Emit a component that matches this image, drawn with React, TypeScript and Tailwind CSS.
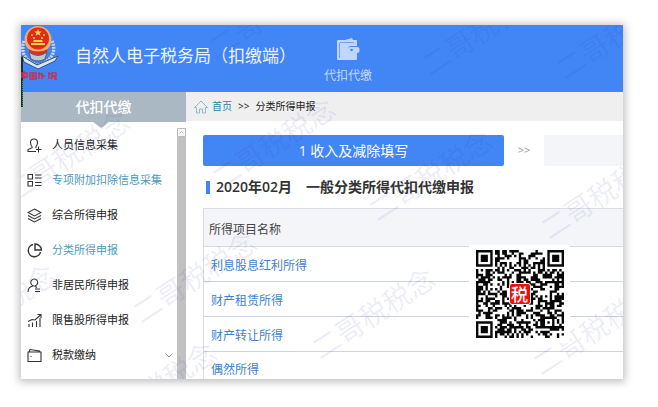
import React from "react";

type Cell = boolean;

const QR_SIZE = 37;

function buildQr(): Cell[][] {
  let seed = 20200217;
  const next = () => {
    seed = (seed * 1103515245 + 12345) % 2147483648;
    return seed / 2147483648;
  };
  const grid = Array.from({ length: QR_SIZE }, () =>
    Array.from({ length: QR_SIZE }, () => next() > 0.46)
  );
  const finder = (ox: number, oy: number) => {
    for (let y = -1; y < 8; y++) {
      for (let x = -1; x < 8; x++) {
        const row = grid[oy + y];
        if (!row || ox + x < 0 || ox + x >= QR_SIZE) continue;
        const d = Math.max(Math.abs(x - 3), Math.abs(y - 3));
        row[ox + x] = d === 3 || d <= 1;
      }
    }
  };
  finder(0, 0);
  finder(QR_SIZE - 7, 0);
  finder(0, QR_SIZE - 7);
  for (let y = -2; y <= 2; y++) {
    for (let x = -2; x <= 2; x++) {
      grid[30 + y][30 + x] = Math.max(Math.abs(x), Math.abs(y)) !== 1;
    }
  }
  for (let i = 8; i < QR_SIZE - 8; i++) {
    grid[6][i] = i % 2 === 0;
    grid[i][6] = i % 2 === 0;
  }
  return grid;
}

const qrPath = buildQr()
  .flatMap((row, y) => row.map((on, x) => (on ? `M${x} ${y}h1v1h-1z` : "")))
  .join("");

function QrCode() {
  return (
    <div className="absolute top-[220px] left-[448px] flex h-[98px] w-[101px] items-center justify-center bg-white">
      <svg viewBox="0 0 37 37" className="size-[88px]" role="img" aria-label="QR">
        <path d={qrPath} fill="#080808" />
      </svg>
      <span className="absolute flex size-[22px] items-center justify-center rounded-[3px] border border-white bg-[#f20d0d] text-[17px] leading-none font-medium text-white">
        税
      </span>
    </div>
  );
}

function Emblem() {
  return (
    <svg viewBox="0 0 38 82" className="relative h-[82px] w-[38px] shrink-0" aria-hidden="true">
      <g fill="none" stroke="#c9d6ea" strokeWidth="3.500" strokeDasharray="2 1">
        <path d="M3 16C-1 27 5 37 16 40" />
        <path d="M31 16C36 27 29 37 18 40" />
      </g>
      <g fill="none" stroke="#536a91" strokeWidth="1" strokeDasharray="1 2">
        <path d="M4 18C1 27 7 35 16 38" />
        <path d="M30 18C33 27 27 35 18 38" />
      </g>
      <path d="M1 31L16 40L37 31L34 36L17 44L3 37Z" fill="#dce5ef" stroke="#30517f" strokeWidth="1" />
      <path d="M8 27Q17 34 26 27L24 34Q17 38 10 34Z" fill="#b9c8da" stroke="#496285" strokeWidth="1" />
      <circle cx="17" cy="14.500" r="13.500" fill="#e9b070" />
      <circle cx="17" cy="13.500" r="11" fill="#e22a18" />
      <path d="M17 4l1 2.600h2.800l-2.200 1.600.8 2.600-2.400-1.600-2.400 1.600.8-2.600-2.200-1.600H16z" fill="#ffd84a" />
      <g fill="#ffd84a">
        <circle cx="11" cy="10" r="1" />
        <circle cx="23" cy="10" r="1" />
        <circle cx="13" cy="13" r="1" />
        <circle cx="21" cy="13" r="1" />
        <path d="M12 17h10l-1-2h-8zM10 18h14v2H10z" />
      </g>
      <path d="M7 24Q17 29 27 24L25 28Q17 32 9 28Z" fill="#d8301c" />
      <path d="M1 32v50" stroke="#17332f" strokeWidth="2" />
      <path d="M1.500 56v25" stroke="#4f9a58" strokeWidth="1" strokeDasharray="1 1" />
      <g stroke="#c9304f" strokeWidth="1.500" fill="none">
        <path d="M1 48h5v4H1zM3 46v8M9 48h6v6H9zM10 51h4M12 48v6M18 47v7M17 49h3M21 48v6M20 51h4M28 47v7M27 49h3M31 48h4v3h-4zM32 51l-2 3M34 51v3h2" />
      </g>
    </svg>
  );
}

function WalletIcon() {
  return (
    <svg viewBox="0 0 24 24" className="size-6" aria-hidden="true">
      <path d="M1 4q0-1 1-1h7l7-2 1 2h3q1 0 1 1v5h-6q-3 0-3 3.500t3 3.500h6v6q0 1-1 1H2q-1 0-1-1z" fill="#bfd7fd" />
      <path d="M4 5.500h14M3.500 6v15" stroke="#6ea2f8" fill="none" />
      <rect x="12" y="10" width="11.500" height="6" rx="2" fill="#bfd7fd" />
      <circle cx="15.500" cy="13" r="1.300" fill="#4285f4" />
    </svg>
  );
}

const icons: Record<string, React.ReactNode> = {
  person: <path d="M5.500 9.500Q3.500 7 3.500 4.500 3.500 1 7 1t3.500 3.500Q10.500 7 8.500 9.500M5.500 9.500L1 11.500V13.500h8M8.500 9.500l1 .5M11.500 8.500v6M9 11.500h5.500" />,
  list: <path d="M1 1.500h4.500V6H1zM1 8.500h4.500V13H1zM8 2h6.500M8 5h6.500M8 9.500h6.500M8 12.500h6.500" />,
  layers: <path d="M7.500 1L14 4.500 7.500 8 1 4.500zM1 7.500L7.500 11 14 7.500M1 10.500L7.500 14 14 10.500" />,
  pie: <path strokeWidth="1.400" d="M6 1.500A6.200 6.200 0 1 0 13.500 9M8 1v6h6.500A6.500 6.500 0 0 0 8 1z" />,
  resident: <path d="M7 8a3.500 3.500 0 1 1 .5 0M1 14q0-5 5-6M7.500 8l2.500 1.500M8 11h5M8 13.500h5" />,
  chart: <path d="M2 14v-3M5.500 14V9.500M9.500 14V8M13 14V5M1 8.500L5 6.500l3 .500 5.500-5M10.500 1.500H14V5" />,
  wallet: <path d="M1 4h13v9.500H1zM2 4l1-2.500L12.500 3v1M3.500 8.500h1" />,
};

const menu = [
  { icon: "person", label: "人员信息采集" },
  { icon: "list", label: "专项附加扣除信息采集", active: true },
  { icon: "layers", label: "综合所得申报" },
  { icon: "pie", label: "分类所得申报", active: true },
  { icon: "resident", label: "非居民所得申报" },
  { icon: "chart", label: "限售股所得申报" },
  { icon: "wallet", label: "税款缴纳", expandable: true },
];

const incomeTypes = ["利息股息红利所得", "财产租赁所得", "财产转让所得", "偶然所得"];

const watermarks = [
  { x: 250, y: -14 },
  { x: 462, y: 4 },
  { x: 597, y: 8 },
  { x: 46, y: 131 },
  { x: 252, y: 118 },
  { x: 409, y: 150 },
  { x: 581, y: 168 },
  { x: -27, y: 284 },
  { x: 173, y: 252 },
  { x: 352, y: 288 },
  { x: 573, y: 304 },
  { x: 133, y: 362 },
];

function Watermarks() {
  return (
    <div className="pointer-events-none absolute inset-0 overflow-hidden" aria-hidden="true">
      {watermarks.map((mark) => (
        <span
          key={`${mark.x}-${mark.y}`}
          className="absolute -translate-x-1/2 -translate-y-1/2 -rotate-33 text-[28px] leading-none whitespace-nowrap text-[#4040b0]/10"
          style={{ left: mark.x, top: mark.y }}
        >
          二哥税税念
        </span>
      ))}
    </div>
  );
}

function Sidebar() {
  return (
    <aside className="flex w-[165px] shrink-0 flex-col">
      <h2 className="flex h-[30px] items-center justify-center bg-[#a9b8c3] text-sm font-medium text-white">
        代扣代缴
      </h2>
      <div className="relative flex flex-1">
        <svg viewBox="0 0 16 6" className="absolute top-0 left-[72px] h-1.5 w-4" aria-hidden="true">
          <path d="M0 0h16L8 6z" fill="#a9b8c3" />
        </svg>
        <nav className="flex-1 py-1.5">
          {menu.map((item) => (
            <a
              key={item.label}
              href="#"
              className={`flex h-[35px] items-center gap-2.5 pr-1 pl-1.5 text-[11px] whitespace-nowrap ${
                item.active ? "text-[#4a9abb]" : "text-[#222]"
              }`}
            >
              <svg viewBox="0 0 15 15" className="size-[15px] shrink-0" fill="none" stroke="#333" strokeWidth="1.1" aria-hidden="true">
                {icons[item.icon]}
              </svg>
              <span className="w-0 flex-1">{item.label}</span>
              {item.expandable && (
                <svg viewBox="0 0 8 5" className="h-[5px] w-2 shrink-0" fill="none" stroke="#999" aria-hidden="true">
                  <path d="M.5.5L4 4 7.500.5" />
                </svg>
              )}
            </a>
          ))}
        </nav>
        <div className="flex w-[9px] flex-col pt-1.5">
          <svg viewBox="0 0 9 9" className="size-[9px] bg-[#f6f6f6]" fill="none" stroke="#bbb" aria-hidden="true">
            <path d="M.5.5h8v8h-8zM2.500 5.500l2-2 2 2" />
          </svg>
          <div className="flex-1 bg-[#c1c1c1]" />
        </div>
      </div>
    </aside>
  );
}

export default function App() {
  return (
    <div className="min-h-screen bg-white pt-[25px] pr-[35px] pb-7 pl-[21px] font-['Open_Sans','Noto_Sans_CJK_SC',sans-serif]">
      <div className="relative bg-white shadow-[0_1px_8px_2px_rgba(0,0,0,0.25)]">
        <header className="relative z-10 flex h-[67px] bg-[#4285f4] text-white">
          <Emblem />
          <h1 className="ml-4 flex h-[62px] items-center text-[17px] whitespace-nowrap text-[#edf4ff]">
            自然人电子税务局（扣缴端）
          </h1>
          <button type="button" className="ml-7 flex flex-col items-center pt-3 text-xs text-[#c5dafd]">
            <WalletIcon />
            <span className="mt-1.5 leading-[18px]">代扣代缴</span>
          </button>
        </header>
        <div className="flex">
          <Sidebar />
          <main className="min-w-0 flex-1">
            <nav className="flex h-[29px] items-center bg-[#efefef] pl-2 text-[10px] text-[#222]">
              <svg viewBox="0 0 14 14" className="mr-1 size-3.5" fill="none" stroke="#8fbac8" aria-hidden="true">
                <path d="M.5 7.500L7 1l6.500 6.500H11.500v5.500h-3V9h-3v4h-3V7.500z" />
              </svg>
              <a href="#" className="text-[#2189a9]">首页</a>
              <span className="mx-1.5">&gt;&gt;</span>
              <span>分类所得申报</span>
            </nav>
            <div className="pt-3.5 pl-[17px]">
              <div className="flex h-[31px]">
                <button type="button" className="w-[301px] shrink-0 rounded-xs bg-[#4285f4] text-sm text-white">
                  1 收入及减除填写
                </button>
                <span className="flex w-10 shrink-0 items-center justify-center text-[11px] text-[#999]">&gt;&gt;</span>
                <div className="flex-1 rounded-l-xs bg-[#f4f5f9]" />
              </div>
              <h2 className="flex h-[42px] items-center pl-[3px] text-sm font-semibold whitespace-nowrap text-[#333]">
                <span className="mr-1.5 h-[13px] w-1 bg-[#4285f4]" />
                2020年02月
                <span className="ml-3.5">一般分类所得代扣代缴申报</span>
              </h2>
              <table className="w-full border-separate border-spacing-0 border-t border-l border-[#d9dce2] text-left text-xs">
                <thead>
                  <tr className="h-[38px] bg-[#f4f5f9]">
                    <th className="border-b border-[#d5d9e2] p-0 pt-1 pl-[5px] font-normal text-[#444]">所得项目名称</th>
                  </tr>
                </thead>
                <tbody>
                  {incomeTypes.map((name) => (
                    <tr key={name} className="group h-[35px] last:h-[27px]">
                      <td className="border-b border-[#cdd3df] p-0 pt-1 pl-[7px] group-last:border-b-0 group-last:pt-2">
                        <a href="#" className="text-[#3f7fd0]">{name}</a>
                      </td>
                    </tr>
                  ))}
                </tbody>
              </table>
            </div>
          </main>
        </div>
        <div className="absolute inset-0 z-20">
          <Watermarks />
          <QrCode />
        </div>
      </div>
    </div>
  );
}
